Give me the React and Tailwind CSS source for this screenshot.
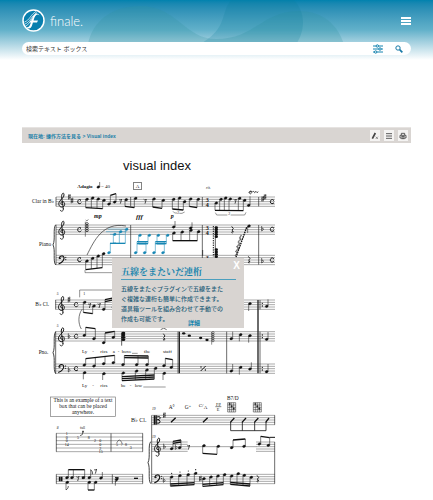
import React from "react";

const JP = "font-['Liberation_Sans','Noto_Sans_CJK_JP',sans-serif]";
const BLUE = "#1687b4";

/* ---------- notation primitives (3 drawing units = 1px) ---------- */

function Staff({ x1, x2, y, n = 5, gap = 7 }) {
  return (
    <g stroke="#555" strokeWidth="1.5">
      {Array.from({ length: n }, (_, i) => (
        <line key={i} x1={x1} x2={x2} y1={y + i * gap} y2={y + i * gap} />
      ))}
    </g>
  );
}

function Bar({ x, y1, y2, w = 2 }) {
  return <line x1={x} x2={x} y1={y1} y2={y2} stroke="#222" strokeWidth={w} />;
}

/* A run of notes joined by a beam going from height b[0] to b[1]. */
function Run({ n, b, c = "#111", beams = 1 }) {
  const up = b[0] < n[0][1];
  const off = up ? 4 : -4;
  const x0 = n[0][0] + off;
  const x1 = n[n.length - 1][0] + off;
  const at = (x) => (x1 === x0 ? b[0] : b[0] + ((b[1] - b[0]) * (x - x0)) / (x1 - x0));
  return (
    <g stroke={c} fill={c}>
      {n.map(([x, y], i) => (
        <g key={i}>
          <ellipse cx={x} cy={y} rx="4.6" ry="3.4" transform={`rotate(-20 ${x} ${y})`} />
          <line x1={x + off} x2={x + off} y1={y} y2={at(x + off)} strokeWidth="1.6" />
        </g>
      ))}
      {n.length > 1 &&
        Array.from({ length: beams }, (_, i) => {
          const d = i * (up ? 6 : -6);
          return <line key={i} x1={x0} y1={b[0] + d} x2={x1} y2={b[1] + d} strokeWidth="4" />;
        })}
    </g>
  );
}

function Treble({ x, y }) {
  return (
    <g transform={`translate(${x} ${y})`} fill="none" stroke="#111" strokeLinecap="round">
      <path strokeWidth="3" d="M1 20C-5 20-5 12 1 11C9 10 11 24 2 27C-8 29-13 18-7 10C-3 3 6-1 6-9C6-17 1-16-1-8C-2 0 3 20 4 33" />
      <path strokeWidth="2.4" d="M4 33C5 41-4 42-5 37" />
    </g>
  );
}

function Bass({ x, y }) {
  return (
    <g transform={`translate(${x} ${y})`} fill="none" stroke="#111" strokeLinecap="round">
      <path strokeWidth="3.4" d="M-8 8C-9 0 7-3 6 8C5 16-2 21-9 24" />
      <circle cx="-6" cy="8" r="1.8" fill="#111" />
      <circle cx="11" cy="5" r="1" fill="#111" />
      <circle cx="11" cy="12" r="1" fill="#111" />
    </g>
  );
}

function Common({ x, y }) {
  return (
    <path d={`M${x + 5} ${y - 4}C${x + 1} ${y - 9} ${x - 5} ${y - 5} ${x - 5} ${y}C${x - 5} ${y + 7} ${x + 3} ${y + 8} ${x + 6} ${y + 3}M${x + 3} ${y - 4}h2`} fill="none" stroke="#111" strokeWidth="3" />
  );
}

function Sharp({ x, y }) {
  return <path d={`M${x - 2} ${y - 8}v16M${x + 2} ${y - 9}v16M${x - 4} ${y - 2}l8-3M${x - 4} ${y + 4}l8-3`} stroke="#111" strokeWidth="1.8" fill="none" />;
}

function Flat({ x, y }) {
  return <path d={`M${x - 2} ${y - 10}v15c4-2 6-5 5-7s-4-1-5 1`} stroke="#111" strokeWidth="1.8" fill="none" />;
}

function Rest({ x, y }) {
  return <path d={`M${x - 4} ${y - 4}c2 3 6 2 8-1l-4 14`} stroke="#111" strokeWidth="2.2" fill="none" />;
}

function QuarterRest({ x, y }) {
  return <path d={`M${x - 2} ${y - 9}l5 7l-4 4l4 6c-5-2-6 0-3 4`} stroke="#111" strokeWidth="2.6" fill="none" />;
}

function Brace({ x, y1, y2 }) {
  const m = (y1 + y2) / 2;
  return <path d={`M${x + 4} ${y1}C${x - 5} ${y1 + 12} ${x + 4} ${m - 16} ${x - 4} ${m}C${x + 4} ${m + 16} ${x - 5} ${y2 - 12} ${x + 4} ${y2}`} stroke="#222" strokeWidth="2.6" fill="none" />;
}

function T({ x, y, s = 15, children, b, i, fill = "#111" }) {
  return (
    <text x={x} y={y} fontSize={s} fontWeight={b ? 700 : 400} fontStyle={i ? "italic" : "normal"} fill={fill}>
      {children}
    </text>
  );
}

function Meter({ x, y }) {
  return (
    <>
      <T x={x} y={y + 13} s={18} b>3</T>
      <T x={x} y={y + 28} s={18} b>4</T>
    </>
  );
}

function SystemOne() {
  return (
    <>
      <g transform="translate(60 525)">
        <Staff x1={108} x2={765} y={66} />
        <Staff x1={108} x2={765} y={150} />
        <Staff x1={108} x2={765} y={241} />
        <Bar x={108} y1={66} y2={94} />
        <Bar x={108} y1={150} y2={269} />
        {[332, 547, 716].map((x) => (
          <g key={x}>
            <Bar x={x} y1={66} y2={94} />
            <Bar x={x} y1={150} y2={269} />
          </g>
        ))}
        <Brace x={103} y1={149} y2={270} />
        <T x={172} y={38} b>Adagio</T>
        <Run n={[[235, 36]]} b={[21, 21]} />
        <T x={243} y={38}>= 40</T>
        <rect x="341" y="22" width="23" height="22" fill="none" stroke="#444" strokeWidth="2" />
        <T x={347} y={39}>A</T>
        <T x={36} y={85} s={16}>Clar in B♭</T>
        <T x={57} y={213} s={16}>Piano</T>
        <T x={222} y={130} s={18} b i>mp</T>
        <T x={348} y={132} s={21} b i>fff</T>
        <Treble x={126} y={69} />
        <Sharp x={148} y={66} />
        <Sharp x={156} y={77} />
        <Common x={178} y={80} />
        <Run n={[[201, 73], [218, 69], [235, 72], [252, 76]]} b={[98, 101]} />
        <Run n={[[267, 87], [284, 81]]} b={[61, 56]} />
        <Rest x={301} y={77} />
        <Run n={[[319, 74], [347, 70]]} b={[94, 98]} />
        <Rest x={375} y={77} />
        <Treble x={126} y={153} />
        <Common x={178} y={164} />
        <g fill="#111">
          {[146, 153, 160, 167].map((y) => <ellipse key={y} cx="201" cy={y} rx="4" ry="3" fill="none" stroke="#111" strokeWidth="2" />)}
        </g>
        <path d="M196 140v45M197 135l4 3l4-5" stroke="#222" strokeWidth="1.6" fill="none" />
        <path d="M201 240C222 198 248 140 318 153" stroke="#222" strokeWidth="2" fill="none" />
        <g stroke={BLUE} strokeWidth="1.4"><path d="M264 162h58M258 170h62M270 178h44" /></g>
        <Run c={BLUE} n={[[284, 178], [302, 170], [320, 163]]} b={[205, 205]} />
        <Run c={BLUE} n={[[267, 233]]} b={[205, 205]} />
        <path d="M270 205h18" stroke={BLUE} strokeWidth="4" />
        <Bass x={126} y={242} />
        <Common x={178} y={254} />
        <Run n={[[201, 258], [218, 250], [235, 243], [251, 236]]} b={[284, 278]} />
        <path d="M195 285v8h85" stroke="#333" strokeWidth="1.5" fill="none" />
        {[0, 55].map((d) => (
          <g key={d}>
            <Run c={BLUE} beams={2} n={[[360 + d, 181], [388 + d, 181]]} b={[206, 206]} />
            <Run c={BLUE} beams={2} n={[[347 + d, 233], [374 + d, 233]]} b={[200, 200]} />
          </g>
        ))}
      </g>
      <g transform="translate(450 525)">
        <T x={168} y={43} s={12} i>rit.</T>
        <T x={62} y={128} s={18} b i>p</T>
        <Run n={[[12, 72], [40, 76]]} b={[96, 100]} />
        <Run n={[[71, 73], [89, 69], [104, 80]]} b={[102, 105]} />
        <path d="M69 109l5 5h8M88 115h8l8-4" stroke="#333" strokeWidth="1.5" fill="none" />
        <T x={82} y={118} s={11} i>3</T>
        <Run n={[[122, 72], [145, 73]]} b={[94, 98]} />
        <Meter x={167} y={67} />
        <Run n={[[199, 84], [213, 73], [227, 69], [241, 72], [269, 70], [284, 76]]} b={[106, 107]} />
        <Rest x={255} y={77} />
        <path d="M196 113l4 7h32M242 120h42l4-8" stroke="#333" strokeWidth="1.5" fill="none" />
        <T x={235} y={121} s={11} i>3</T>
        <Run n={[[296, 91]]} b={[64, 64]} />
        <path d="M296 53c3-6 9-6 8 0s-7 4-5-1s6-4 8-1l4-2l3 4l4-4l3 4l4-3" stroke="#111" strokeWidth="2.2" fill="none" />
        <Sharp x={338} y={72} />
        <Sharp x={345} y={66} />
        <Common x={366} y={80} />
        <Run n={[[71, 156]]} b={[138, 138]} />
        <Run n={[[72, 174], [97, 171], [123, 166], [146, 170]]} b={[197, 197]} />
        <Run n={[[122, 159]]} b={[142, 142]} />
        <Meter x={167} y={151} />
        <g fill="#111">{[158, 164, 171, 178, 185, 224, 231, 238, 245].map((y) => <ellipse key={y} cx="199" cy={y} rx="5" ry="4" />)}</g>
        <path d="M190 153v92" stroke="#111" strokeWidth="3" strokeDasharray="4 3" />
        <path d="M196 155v92" stroke="#111" strokeWidth="2" />
        <QuarterRest x={247} y={163} />
        <Run n={[[297, 153]]} b={[174, 174]} />
        <path d="M290 157L258 246" stroke="#111" strokeWidth="4" strokeDasharray="5 2" />
        <path d="M274 180l-5 9l3 4l-8 8l5 5l-8 9l4 5l-7 9l4 5l-7 9" stroke="#444" strokeWidth="4" strokeDasharray="2 1" fill="none" />
        <Flat x={337} y={163} />
        <Common x={366} y={163} />
        <Flat x={337} y={259} />
        <Common x={366} y={255} />
        <QuarterRest x={297} y={253} />
        <Meter x={167} y={241} />
      </g>
    </>
  );
}

function SystemTwo() {
  return (
    <>
      <g transform="translate(60 855)">
        <Staff x1={106} x2={765} y={45} />
        <Staff x1={106} x2={765} y={140} />
        <Staff x1={106} x2={765} y={237} />
        <Bar x={107} y1={45} y2={73} />
        <Bar x={107} y1={140} y2={265} />
        <Brace x={103} y1={140} y2={266} />
        <T x={46} y={63} s={16}>B♭ Cl.</T>
        <T x={56} y={208} s={16}>Pno.</T>
        <T x={110} y={31} s={11} i>5</T>
        <T x={110} y={126} s={11} i>5</T>
        <path d="M179 37V15h98" stroke="#333" strokeWidth="1.6" fill="none" />
        <T x={190} y={30} s={12}>1</T>
        <Treble x={125} y={49} />
        <Sharp x={147} y={44} />
        <Common x={168} y={59} />
        <Run n={[[194, 52], [222, 63]]} b={[82, 86]} />
        <Rest x={208} y={60} />
        <Rest x={237} y={60} />
        <Run n={[[251, 73], [280, 66]]} b={[44, 38]} beams={2} />
        <path d="M186 73C174 90 174 116 184 132" stroke="#333" strokeWidth="2" fill="none" />
        <Treble x={125} y={143} />
        <Flat x={147} y={155} />
        <Common x={168} y={154} />
        <Run n={[[193, 151], [222, 161]]} b={[127, 131]} />
        <Run n={[[251, 173], [280, 157]]} b={[144, 139]} />
        <g fill="#111">{[144, 150, 157, 164].map((y) => <ellipse key={y} cx="310" cy={y} rx="6" ry="4" />)}</g>
        <path d="M305 144v38" stroke="#111" strokeWidth="2" />
        <T x={186} y={205}>Ly</T><T x={217} y={205}>-</T><T x={241} y={205}>rics</T>
        <T x={278} y={205}>a</T><T x={293} y={205}>-</T><T x={305} y={205}>bove</T>
        <path d="M336 205h17" stroke="#222" strokeWidth="1.4" />
        <T x={372} y={205}>the</T>
        <T x={429} y={205}>staff</T>
        <Bass x={125} y={238} />
        <Flat x={147} y={256} />
        <Common x={168} y={251} />
        <Run n={[[193, 240], [222, 243], [251, 236], [280, 233]]} b={[221, 211]} />
        <Run n={[[194, 263]]} b={[283, 283]} />
        <Run n={[[252, 266]]} b={[285, 285]} />
        <Run n={[[309, 239], [350, 239], [381, 239]]} b={[212, 213]} beams={2} />
        <Run n={[[310, 264], [350, 258], [381, 255], [407, 250]]} b={[287, 282]} beams={3} />
        <T x={186} y={307}>Ly</T><T x={217} y={307}>-</T><T x={241} y={307}>rics</T>
        <T x={303} y={307}>be</T><T x={329} y={307}>-</T><T x={344} y={307}>low</T>
        <path d="M370 306h67" stroke="#222" strokeWidth="1.4" />
      </g>
      <g transform="translate(330 750)">
        <Bar x={204} y1={245} y2={370} />
        <Bar x={208} y1={245} y2={370} w={4} />
        <Bar x={350} y1={245} y2={370} />
        <Bar x={444} y1={150} y2={370} w={4} />
        <Bar x={450} y1={150} y2={178} />
        <Bar x={450} y1={245} y2={370} />
        {[160, 255, 352].map((y) => (
          <g key={y} fill="#111"><circle cx="457" cy={y} r="2" /><circle cx="457" cy={y + 8} r="2" /></g>
        ))}
        <path d="M278 17v-17" stroke="#111" strokeWidth="2" />
        <Run n={[[420, 161]]} b={[183, 183]} />
        <Run n={[[470, 169]]} b={[148, 148]} />
        <QuarterRest x={162} y={260} />
        <path d="M152 239q9-9 18 0" stroke="#222" strokeWidth="2" fill="none" />
        <g fill="#111">{[[221, 250], [238, 257], [272, 264], [291, 270]].map(([x, y]) => <ellipse key={x} cx={x} cy={y} rx="5" ry="3.5" />)}</g>
        {[248, 254, 260, 266, 272].map((y) => <circle key={y} cx="309" cy={y} r="3.4" fill="none" stroke="#222" strokeWidth="1.6" />)}
        <path d="M305 246v38" stroke="#222" strokeWidth="1.5" />
        <Run n={[[364, 266]]} b={[245, 245]} />
        <Run n={[[392, 254]]} b={[274, 274]} />
        <Run n={[[420, 257]]} b={[278, 278]} />
        <Run n={[[470, 268]]} b={[246, 246]} />
        <Run n={[[162, 347], [184, 352]]} b={[325, 329]} />
        <Run n={[[163, 370]]} b={[390, 390]} />
        <path d="M272 363l15-15" stroke="#111" strokeWidth="3" />
        <circle cx="273" cy="351" r="2" /><circle cx="286" cy="360" r="2" />
        <Run n={[[364, 363]]} b={[342, 342]} />
        <Run n={[[392, 352]]} b={[374, 374]} />
        <Run n={[[420, 357]]} b={[337, 337]} />
        <Run n={[[470, 365]]} b={[342, 342]} />
      </g>
    </>
  );
}

function ChordGrid({ x, y }) {
  return (
    <g stroke="#222" fill="#222">
      <path d={`M${x} ${y}h24v28h-24zM${x} ${y + 7}h24M${x} ${y + 14}h24M${x} ${y + 21}h24M${x + 6} ${y}v28M${x + 12} ${y}v28M${x + 18} ${y}v28`} fill="none" strokeWidth="1.5" />
      <circle cx={x + 6} cy={y + 4} r="2.4" /><circle cx={x + 12} cy={y + 11} r="2.4" /><circle cx={x + 18} cy={y + 18} r="2.4" />
    </g>
  );
}

function SystemThree() {
  return (
    <>
      <g transform="translate(60 1170)">
        <rect x="91" y="21" width="195" height="58" fill="#fff" stroke="#777" strokeWidth="2" />
        <g textAnchor="middle">
          <T x={189} y={35} s={16}>This is an example of a text</T>
          <T x={189} y={53} s={16}>box that can be placed</T>
          <T x={189} y={71} s={16}>anywhere.</T>
        </g>
        <Staff x1={108} x2={369} y={130} n={6} gap={11} />
        {[109, 273, 368].map((x) => <Bar key={x} x={x} y1={130} y2={185} />)}
        <T x={110} y={117} s={11} i>8</T>
        <T x={180} y={117} s={11}>full</T>
        {[[137, 135, "1"], [137, 146, "0"], [137, 157, "0"], [134, 168, "14"], [171, 146, "5"], [203, 146, "8"], [222, 157, "2"], [238, 157, "0"], [238, 168, "0"], [238, 179, "2"], [236, 190, "15"], [288, 168, "5"], [302, 168, "7"], [315, 168, "8"], [329, 178, "3"]].map(([x, y, t], i) => (
          <T key={i} x={x} y={y} s={12}>{t}</T>
        ))}
        <path d="M180 137q9 0 9-12" stroke="#222" strokeWidth="2" fill="none" />
        <path d="M186 127l3-6l3 6z" />
        <path d="M290 159q8-18 16 0" stroke="#222" strokeWidth="1.6" fill="none" />
        <Staff x1={108} x2={369} y={253} />
        {[109, 277, 368].map((x) => <Bar key={x} x={x} y1={253} y2={281} />)}
        <path d="M119 260v14M125 260v14" stroke="#111" strokeWidth="5" />
        <Run n={[[141, 263], [156, 263], [190, 263]]} b={[239, 239]} />
        <Rest x={173} y={264} />
        <path d="M186 259l8 8M194 259l-8 8" stroke="#111" strokeWidth="2" />
        <Run n={[[142, 277]]} b={[300, 300]} />
        <path d="M138 300q8-5 7-12" stroke="#111" strokeWidth="2" fill="none" />
        <Run n={[[208, 263]]} b={[239, 239]} />
        <path d="M212 239q7 6 5 14" stroke="#111" strokeWidth="2.4" fill="none" />
        <Rest x={226} y={242} />
        <Run n={[[243, 264]]} b={[246, 246]} />
        <Run n={[[208, 277], [227, 277]]} b={[300, 300]} />
        <Run n={[[290, 268]]} b={[287, 287]} />
        <path d="M286 276q8-5 9-14M285 263h9" stroke="#111" strokeWidth="3" fill="none" />
        <path d="M342 265h12" stroke="#111" strokeWidth="4" />
        <T x={333} y={95} s={18}>B♭ Cl.</T>
      </g>
      <g transform="translate(435 1170)">
        <T x={21} y={61} s={11} i>19</T>
        <T x={21} y={143} s={11} i>19</T>
        <T x={71} y={56} s={16}>A°</T>
        <T x={119} y={56} s={16}>G⁺</T>
        <T x={161} y={51} s={15}>C/</T>
        <T x={176} y={58} s={15}>A</T>
        <T x={213} y={47} s={13}>F♯</T>
        <path d="M211 50h18" stroke="#111" strokeWidth="1.5" />
        <T x={215} y={63} s={13}>E</T>
        <T x={246} y={30} s={16}>B7/D</T>
        <ChordGrid x={248} y={38} />
        <ChordGrid x={325} y={38} />
        <Staff x1={20} x2={390} y={76} />
        <path d="M20 76v205" stroke="#222" strokeWidth="2" />
        <Bar x={389} y1={76} y2={104} />
        <path d="M29 76v28" stroke="#111" strokeWidth="6" />
        <path d="M35 76v28M37 80q10-2 8 5q-2 5-8 4q7 0 8 5q1 7-8 6" stroke="#111" strokeWidth="3" fill="none" />
        <Sharp x={58} y={76} />
        <path d="M78 97l14-14M174 97l14-14M256 97l12-13M291 97l12-13M328 97l12-13M362 97l10-13" stroke="#111" strokeWidth="4" />
        <path d="M257 96v26h106V96M292 96v26M329 96v26" stroke="#111" strokeWidth="2.4" fill="none" />
        <Brace x={13} y1={155} y2={281} />
        <Staff x1={20} x2={128} y={156} />
        <path d="M128 170h206" stroke="#555" strokeWidth="1.6" />
        <Staff x1={333} x2={390} y={156} />
        <Staff x1={20} x2={390} y={253} />
        <Bar x={389} y1={156} y2={281} />
        <Treble x={38} y={159} />
        <Flat x={58} y={171} />
        <Run n={[[80, 176], [104, 173]]} b={[154, 150]} beams={2} />
        <Flat x={93} y={173} />
        <Rest x={130} y={170} />
        <Run n={[[177, 167], [220, 169]]} b={[190, 193]} />
        <Run n={[[260, 173], [297, 169]]} b={[150, 147]} />
        <Run n={[[343, 162], [370, 166]]} b={[139, 143]} />
        <path d="M374 142h16" stroke="#111" strokeWidth="3" />
        <Bass x={38} y={254} />
        <Flat x={57} y={272} />
        <Run n={[[80, 261], [105, 257], [130, 254], [152, 250]]} b={[288, 284]} beams={2} />
        <g fill="#111">{[[80, 250], [105, 246], [130, 243], [152, 239]].map(([x, y]) => <circle key={x} cx={x} cy={y} r="1.8" />)}</g>
        <Sharp x={166} y={266} />
        <Run n={[[177, 266], [198, 261], [219, 258], [239, 254]]} b={[289, 284]} beams={2} />
        <Run n={[[260, 258], [280, 251], [298, 256], [319, 262]]} b={[283, 288]} beams={2} />
        <QuarterRest x={338} y={265} />
      </g>
    </>
  );
}

function Score() {
  return (
    <svg viewBox="66 534 810 948" className="block w-full font-['Liberation_Serif','DejaVu_Sans',serif]" role="img" aria-label="visual index">
      <SystemOne />
      <SystemTwo />
      <SystemThree />
    </svg>
  );
}

function Waves() {
  return (
    <svg viewBox="0 0 433 60" preserveAspectRatio="none" className="absolute inset-0 h-full w-full" aria-hidden="true">
      <path d="M88 44C93 20 113 6 140 6C178 6 184 39 216 39C255 39 262 11 299 11C324 11 338 26 344 44Z" fill="#33939f" fillOpacity="0.24" />
      <path d="M202 43C228 27 220 14 231 0H294C307 14 304 32 297 43Z" fill="#087e99" fillOpacity="0.2" />
    </svg>
  );
}

function Logo() {
  return (
    <a href="#home" className="flex items-center gap-[5px] text-white" aria-label="finale.">
      <svg viewBox="0 0 46 46" className="h-[23px] w-[23px]">
        <circle cx="23" cy="23" r="21" fill="#087fae" stroke="#fff" strokeWidth="3" />
        <path d="M35 13C29 8 26 14 24 20L20 33C18 39 13 41 9 36C15 37 16 32 18 26L21 18C24 8 32 6 35 13ZM17 23h15l-2 4H15Z" fill="#fff" />
        <path d="M5 26C15 23 17 11 28 5M6 30C17 26 18 14 30 7M8 34C17 29 19 18 25 13" stroke="#fff" strokeWidth="1.4" fill="none" />
      </svg>
      <span className="font-[Lato,sans-serif] text-[13px] leading-4 font-light">finale.</span>
    </a>
  );
}

function Header() {
  return (
    <header className="relative bg-linear-to-b from-[#0082ae] via-[#62b1ca] via-50% to-white px-[22px] pt-[9px] pb-[5px]">
      <Waves />
      <div className="relative flex items-center justify-between">
        <Logo />
        <button type="button" aria-label="メニュー" className="flex w-[10px] flex-col gap-px">
          <span className="h-[2px] bg-white" />
          <span className="h-[2px] bg-white" />
          <span className="h-[2px] bg-white" />
        </button>
      </div>
      <form className="relative mt-[10px] flex h-[13px] items-center rounded-full bg-white pr-2 pl-[4px]">
        <input aria-label="検索テキスト ボックス" placeholder="検索テキスト ボックス" className={`h-[13px] min-w-0 flex-1 bg-transparent text-[6px] text-[#333] outline-none placeholder:text-[#333] placeholder:opacity-100 ${JP}`} />
        <button type="button" aria-label="フィルター" className="mr-3">
          <svg viewBox="0 0 30 30" className="h-[10px] w-[10px]" fill="#fff" stroke="#1684b0" strokeWidth="3">
            <path d="M0 6h30M0 15h30M0 24h30" />
            <circle cx="13" cy="6" r="3.6" /><circle cx="21" cy="15" r="3.6" /><circle cx="8" cy="24" r="3.6" />
          </svg>
        </button>
        <button type="button" aria-label="検索" className="">
          <svg viewBox="0 0 24 24" className="h-2 w-2" fill="none" stroke="#1678a6">
            <circle cx="9" cy="9" r="6.5" strokeWidth="3" />
            <path d="M14 14l8 8" strokeWidth="5" />
          </svg>
        </button>
      </form>
    </header>
  );
}

function ToolButton({ label, children }) {
  return (
    <button type="button" aria-label={label} className="flex h-[11px] w-[10px] items-center justify-center bg-[#f4f3f2]">
      <svg viewBox="0 0 24 24" className="h-2 w-2" fill="none" stroke="#444" strokeWidth="3">{children}</svg>
    </button>
  );
}

function Breadcrumb() {
  return (
    <div className="flex h-4 items-center justify-between border-t border-[#e6e3e1] bg-[#d9d5d2] pr-[3px] pl-[6px]">
      <nav className={`text-[5px] leading-[8px] font-bold text-[#1b7fa8] ${JP}`}>
        現在地: <a href="#contents">操作方法を見る</a> &gt; Visual index
      </nav>
      <div className="flex gap-1">
        <ToolButton label="ハイライトを削除"><path d="M4 20L13 3" strokeWidth="5" /><path d="M14 14l7 7M21 14l-7 7" strokeWidth="1.5" /></ToolButton>
        <ToolButton label="目次"><path d="M3 5h18M3 12h18M3 19h18" strokeWidth="2.6" /></ToolButton>
        <ToolButton label="印刷"><path d="M7 9V4h10v5M3 10h18v8H3zM7 20h10" strokeWidth="2.6" /><path d="M7 14h10" /></ToolButton>
      </div>
    </div>
  );
}

function Popup() {
  return (
    <aside className={`absolute top-20 left-[90px] h-[70px] w-[132px] bg-[#d8d4d1] pt-2 pr-2 pl-[9px] text-[#1d5c78] ${JP}`}>
      <button type="button" aria-label="閉じる" className="absolute top-[2px] right-[4px] text-[10px] leading-[11px] font-bold text-white">X</button>
      <h2 className="border-b border-[#4b9fbe] pb-[2px] font-['Noto_Serif_CJK_JP','Noto_Sans_CJK_JP',serif] text-[9px] leading-[11px] font-bold text-[#1884ad]">五線をまたいだ連桁</h2>
      <p className="mt-[4px] text-[6px] leading-[10px] font-medium">
        五線をまたぐプラグインで五線をまた<br />ぐ複雑な連桁も簡単に作成できます。<br />道具箱ツールを組み合わせて手動での<br />作成も可能です。
      </p>
      <a href="#details" className="absolute bottom-[1px] left-[76px] text-[6px] leading-[8px] font-bold text-[#1884ad]">詳細</a>
    </aside>
  );
}

export default function App() {
  return (
    <div className="bg-white">
      <Header />
      <main className="px-[22px] pt-[67px]">
        <Breadcrumb />
        <section className="w-[270px]">
          <h1 className="mt-[15px] text-center font-['Liberation_Sans',sans-serif] text-[13px] leading-4 text-[#111]">visual index</h1>
          <div className="relative mt-1">
            <Score />
            <Popup />
          </div>
        </section>
      </main>
    </div>
  );
}
